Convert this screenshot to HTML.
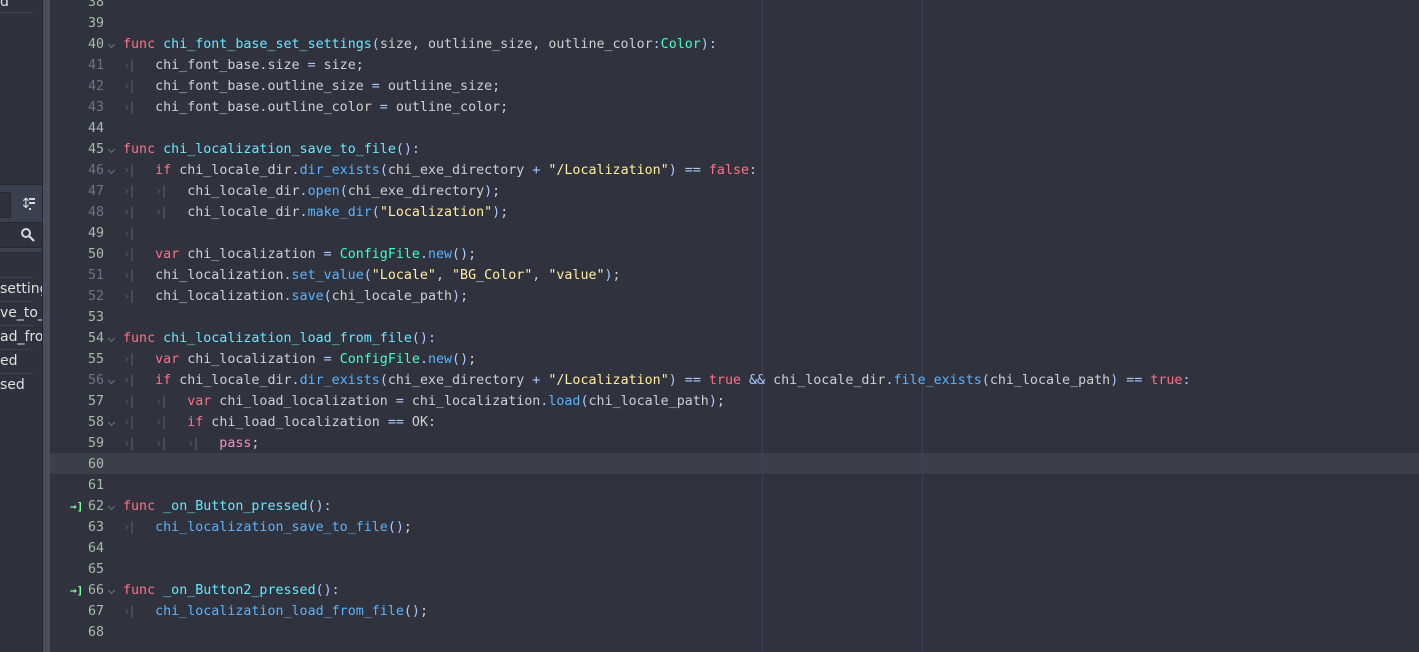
<!DOCTYPE html>
<html><head><meta charset="utf-8"><style>
html,body{margin:0;width:1419px;height:652px;overflow:hidden;}
body{background:#30323d;position:relative;font-family:"DejaVu Sans Mono","Liberation Mono",monospace;}
#left{position:absolute;left:0;top:0;width:42px;height:652px;background:#3b3f4e;border-right:1px solid #252731;}
#strip{position:absolute;left:43px;top:0;width:7px;height:652px;background:#4a4f60;}
.box{position:absolute;background:#2f323d;border:1px solid #252731;}
.li{position:absolute;left:0;font-family:"DejaVu Sans","Liberation Sans",sans-serif;font-size:14px;color:#e0e0e0;white-space:nowrap;overflow:hidden;width:42px;}
.sep{position:absolute;left:0;width:34px;height:1px;background:#3e4250;}
#code{position:absolute;left:0;top:2px;width:1419px;height:652px;}
.ln{position:absolute;left:50px;width:1369px;height:21px;line-height:21px;font-size:13.33px;white-space:pre;color:#cdcfd2;}
.n{position:absolute;left:12px;width:42px;text-align:right;color:#6f7383;}
.g{color:#a6bda8;}
.f{position:absolute;left:59px;top:8px;width:4px;height:4px;border-right:1.5px solid #6f7383;border-bottom:1.5px solid #6f7383;transform:rotate(45deg);}
.t{position:absolute;color:#515565;font-size:12px;font-weight:bold;letter-spacing:-2px;}
.c{position:absolute;left:73px;}
.k{color:#ff7085}.d{color:#66e6ff}.m{color:#57b3ff}.s{color:#ffeda1}.y{color:#abc9ff}.ty{color:#42ffc2}.p{color:#ff8ccc}
.vl{position:absolute;top:0;width:1px;height:652px;background:#3d4050;}
.arr{position:absolute;left:20px;color:#7dff9c;font-size:11px;font-weight:bold;}
</style></head><body>
<div id="left">
 <div class="box" style="left:-2px;top:-2px;width:43px;height:185px;"></div>
 <div class="li" style="top:-6px;">d</div>
 <div class="sep" style="top:12px;"></div>
 <div class="box" style="left:-2px;top:192px;width:11px;height:24px;"></div>
 <div style="position:absolute;left:20px;top:196px;color:#d5d7de;font-size:14px;font-family:'DejaVu Sans',sans-serif;">↕</div>
 <div style="position:absolute;left:29px;top:198px;width:6px;height:2px;background:#d5d7de;box-shadow:0 4px 0 #d5d7de;"></div>
 <div style="position:absolute;left:29px;top:208px;width:2px;height:2px;background:#d5d7de;"></div>
 <div class="box" style="left:-2px;top:222px;width:43px;height:24px;"></div>
 <svg style="position:absolute;left:20px;top:227px" width="16" height="16"><circle cx="6" cy="6" r="4" fill="none" stroke="#d5d7de" stroke-width="2"/><line x1="9" y1="9" x2="14" y2="14" stroke="#d5d7de" stroke-width="2.2"/></svg>
 <div class="box" style="left:-2px;top:252px;width:43px;height:410px;"></div>
 <div class="sep" style="top:277px"></div>
 <div class="li" style="top:281px">setting</div>
 <div class="sep" style="top:301px"></div>
 <div class="li" style="top:305px">ve_to_f</div>
 <div class="sep" style="top:325px"></div>
 <div class="li" style="top:329px">ad_from</div>
 <div class="sep" style="top:349px"></div>
 <div class="li" style="top:353px">ed</div>
 <div class="sep" style="top:373px"></div>
 <div class="li" style="top:377px">sed</div>
</div>
<div id="strip"></div>
<div style="position:absolute;left:50px;top:453px;width:1369px;height:21px;background:#3c3e4a;"></div>
<div class="vl" style="left:762px"></div>
<div class="vl" style="left:922px"></div>
<div id="code">
<div class="ln" style="top:-10px"><span class="n g">38</span></div>
<div class="ln" style="top:11px"><span class="n g">39</span></div>
<div class="ln" style="top:32px"><span class="n g">40</span><span class="f"></span><span class="c"><span class="k">func</span> <span class="d">chi_font_base_set_settings</span><span class="y">(</span>size, outliine_size, outline_color<span class="y">:</span><span class="ty">Color</span><span class="y">):</span></span></div>
<div class="ln" style="top:53px"><span class="n">41</span><span class="t" style="left:73px">›|</span><span class="c">    chi_font_base<span class="y">.</span>size <span class="y">=</span> size;</span></div>
<div class="ln" style="top:74px"><span class="n">42</span><span class="t" style="left:73px">›|</span><span class="c">    chi_font_base<span class="y">.</span>outline_size <span class="y">=</span> outliine_size;</span></div>
<div class="ln" style="top:95px"><span class="n">43</span><span class="t" style="left:73px">›|</span><span class="c">    chi_font_base<span class="y">.</span>outline_color <span class="y">=</span> outline_color;</span></div>
<div class="ln" style="top:116px"><span class="n g">44</span></div>
<div class="ln" style="top:137px"><span class="n g">45</span><span class="f"></span><span class="c"><span class="k">func</span> <span class="d">chi_localization_save_to_file</span><span class="y">():</span></span></div>
<div class="ln" style="top:158px"><span class="n">46</span><span class="f"></span><span class="t" style="left:73px">›|</span><span class="c">    <span class="k">if</span> chi_locale_dir<span class="y">.</span><span class="m">dir_exists</span><span class="y">(</span>chi_exe_directory <span class="y">+</span> <span class="s">"/Localization"</span><span class="y">)</span> <span class="y">==</span> <span class="k">false</span><span class="y">:</span></span></div>
<div class="ln" style="top:179px"><span class="n">47</span><span class="t" style="left:73px">›|</span><span class="t" style="left:105px">›|</span><span class="c">        chi_locale_dir<span class="y">.</span><span class="m">open</span><span class="y">(</span>chi_exe_directory<span class="y">)</span>;</span></div>
<div class="ln" style="top:200px"><span class="n">48</span><span class="t" style="left:73px">›|</span><span class="t" style="left:105px">›|</span><span class="c">        chi_locale_dir<span class="y">.</span><span class="m">make_dir</span><span class="y">(</span><span class="s">"Localization"</span><span class="y">)</span>;</span></div>
<div class="ln" style="top:221px"><span class="n g">49</span><span class="t" style="left:73px">›|</span></div>
<div class="ln" style="top:242px"><span class="n g">50</span><span class="t" style="left:73px">›|</span><span class="c">    <span class="k">var</span> chi_localization <span class="y">=</span> <span class="ty">ConfigFile</span><span class="y">.</span><span class="m">new</span><span class="y">()</span>;</span></div>
<div class="ln" style="top:263px"><span class="n">51</span><span class="t" style="left:73px">›|</span><span class="c">    chi_localization<span class="y">.</span><span class="m">set_value</span><span class="y">(</span><span class="s">"Locale"</span>, <span class="s">"BG_Color"</span>, <span class="s">"value"</span><span class="y">)</span>;</span></div>
<div class="ln" style="top:284px"><span class="n">52</span><span class="t" style="left:73px">›|</span><span class="c">    chi_localization<span class="y">.</span><span class="m">save</span><span class="y">(</span>chi_locale_path<span class="y">)</span>;</span></div>
<div class="ln" style="top:305px"><span class="n g">53</span></div>
<div class="ln" style="top:326px"><span class="n g">54</span><span class="f"></span><span class="c"><span class="k">func</span> <span class="d">chi_localization_load_from_file</span><span class="y">():</span></span></div>
<div class="ln" style="top:347px"><span class="n g">55</span><span class="t" style="left:73px">›|</span><span class="c">    <span class="k">var</span> chi_localization <span class="y">=</span> <span class="ty">ConfigFile</span><span class="y">.</span><span class="m">new</span><span class="y">()</span>;</span></div>
<div class="ln" style="top:368px"><span class="n">56</span><span class="f"></span><span class="t" style="left:73px">›|</span><span class="c">    <span class="k">if</span> chi_locale_dir<span class="y">.</span><span class="m">dir_exists</span><span class="y">(</span>chi_exe_directory <span class="y">+</span> <span class="s">"/Localization"</span><span class="y">)</span> <span class="y">==</span> <span class="k">true</span> <span class="y">&amp;&amp;</span> chi_locale_dir<span class="y">.</span><span class="m">file_exists</span><span class="y">(</span>chi_locale_path<span class="y">)</span> <span class="y">==</span> <span class="k">true</span><span class="y">:</span></span></div>
<div class="ln" style="top:389px"><span class="n g">57</span><span class="t" style="left:73px">›|</span><span class="t" style="left:105px">›|</span><span class="c">        <span class="k">var</span> chi_load_localization <span class="y">=</span> chi_localization<span class="y">.</span><span class="m">load</span><span class="y">(</span>chi_locale_path<span class="y">)</span>;</span></div>
<div class="ln" style="top:410px"><span class="n g">58</span><span class="f"></span><span class="t" style="left:73px">›|</span><span class="t" style="left:105px">›|</span><span class="c">        <span class="k">if</span> chi_load_localization <span class="y">==</span> OK<span class="y">:</span></span></div>
<div class="ln" style="top:431px"><span class="n g">59</span><span class="t" style="left:73px">›|</span><span class="t" style="left:105px">›|</span><span class="t" style="left:137px">›|</span><span class="c">            <span class="p">pass</span>;</span></div>
<div class="ln" style="top:452px"><span class="n g">60</span></div>
<div class="ln" style="top:473px"><span class="n g">61</span></div>
<div class="ln" style="top:494px"><span class="arr">→]</span><span class="n g">62</span><span class="f"></span><span class="c"><span class="k">func</span> <span class="d">_on_Button_pressed</span><span class="y">():</span></span></div>
<div class="ln" style="top:515px"><span class="n g">63</span><span class="t" style="left:73px">›|</span><span class="c">    <span class="m">chi_localization_save_to_file</span><span class="y">()</span>;</span></div>
<div class="ln" style="top:536px"><span class="n g">64</span></div>
<div class="ln" style="top:557px"><span class="n g">65</span></div>
<div class="ln" style="top:578px"><span class="arr">→]</span><span class="n g">66</span><span class="f"></span><span class="c"><span class="k">func</span> <span class="d">_on_Button2_pressed</span><span class="y">():</span></span></div>
<div class="ln" style="top:599px"><span class="n g">67</span><span class="t" style="left:73px">›|</span><span class="c">    <span class="m">chi_localization_load_from_file</span><span class="y">()</span>;</span></div>
<div class="ln" style="top:620px"><span class="n g">68</span></div>
</div>
</body></html>
